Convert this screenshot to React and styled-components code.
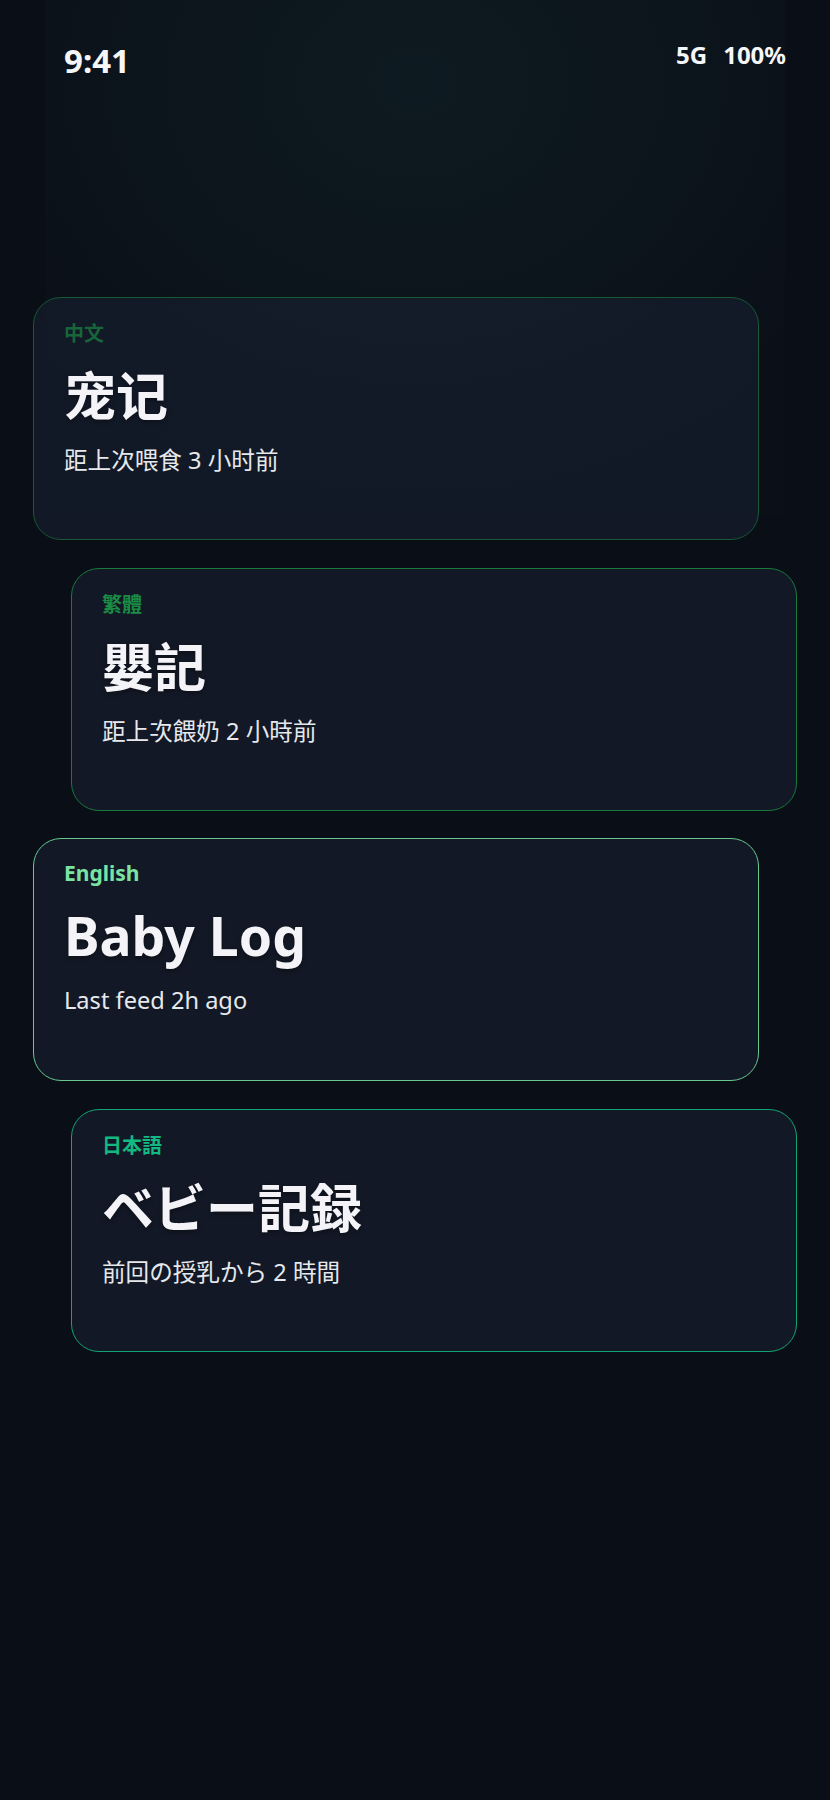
import React from "react";
import styled, { createGlobalStyle } from "styled-components";

const GlobalStyle = createGlobalStyle`
  * { box-sizing: border-box; }
  html, body { margin: 0; padding: 0; background: #0a0e17; }
  body {
    font-family: "Noto Sans", "Noto Sans CJK SC", sans-serif;
    -webkit-font-smoothing: antialiased;
  }
`;

const Screen = styled.div`
  min-height: 1800px;
  width: 830px;
  background-color: #0a0e17;
  background-image: radial-gradient(
    ellipse 72% 85% at 50% 16%,
    rgba(40, 110, 100, 0.13) 0%,
    rgba(40, 110, 100, 0.07) 45%,
    rgba(40, 110, 100, 0.028) 80%,
    rgba(40, 110, 100, 0.012) 100%
  );
  background-size: 740px 515px;
  background-position: 45px 0;
  background-repeat: no-repeat;
  display: flex;
  flex-direction: column;
`;

const StatusBar = styled.div`
  display: flex;
  justify-content: space-between;
  align-items: flex-start;
  padding: 43px 44px 0 64px;
  color: #f5f6f8;
  font-family: "Noto Sans", sans-serif;
  font-weight: 700;
  line-height: 1;
`;

const Clock = styled.span`
  font-size: 33px;
  margin-top: 1px;
`;

const Indicators = styled.div`
  display: flex;
  gap: 16px;
  font-size: 24px;
`;

const CardList = styled.div`
  display: flex;
  flex-direction: column;
  gap: 27.5px;
  margin-top: 220px;
  padding-left: 33px;
`;

const fonts = {
  sc: `"Noto Sans", "Noto Sans CJK SC", sans-serif`,
  tc: `"Noto Sans", "Noto Sans CJK TC", sans-serif`,
  en: `"Noto Sans", sans-serif`,
  jp: `"Noto Sans", "Noto Sans CJK JP", sans-serif`,
};

const Card = styled.section`
  width: 726px;
  height: 243px;
  margin-left: ${(p) => (p.$shift ? "38px" : "0")};
  padding: ${(p) => (p.$latin ? "20px" : "22px")} 30px 0 30px;
  border: 1.5px solid ${(p) => p.$border};
  border-radius: 28px;
  background: rgba(30, 41, 59, 0.4);
  font-family: ${(p) => fonts[p.$lang]};
  display: flex;
  flex-direction: column;
`;

const Label = styled.div`
  font-size: ${(p) => (p.$latin ? "21px" : "20px")};
  line-height: 28px;
  font-weight: 700;
  color: ${(p) => p.$color};
`;

const Title = styled.h2`
  margin: ${(p) => (p.$latin ? "17px" : "16px")} 0 0;
  font-size: ${(p) => (p.$latin ? "53.5px" : "52px")};
  line-height: 64px;
  font-weight: 700;
  color: #f4f4f8;
  text-shadow: 0 2px 4px rgba(0, 0, 0, 0.35);
`;

const Subtitle = styled.p`
  margin: 16px 0 0;
  font-size: 23.6px;
  line-height: 32px;
  font-weight: 400;
  color: #e6e8ec;
`;

const cards = [
  {
    lang: "sc",
    label: "中文",
    labelColor: "#17663a",
    border: "#175a33",
    title: "宠记",
    sub: "距上次喂食 3 小时前",
  },
  {
    lang: "tc",
    label: "繁體",
    labelColor: "#1a8c44",
    border: "#177a3c",
    title: "嬰記",
    sub: "距上次餵奶 2 小時前",
    shift: true,
  },
  {
    lang: "en",
    label: "English",
    labelColor: "#7be3a2",
    border: "#68c990",
    title: "Baby Log",
    sub: "Last feed 2h ago",
    latin: true,
  },
  {
    lang: "jp",
    label: "日本語",
    labelColor: "#12b981",
    border: "#12a574",
    title: "ベビー記録",
    sub: "前回の授乳から 2 時間",
    shift: true,
  },
];

export default function App() {
  return (
    <>
      <GlobalStyle />
      <Screen>
        <StatusBar>
          <Clock>9:41</Clock>
          <Indicators>
            <span>5G</span>
            <span>100%</span>
          </Indicators>
        </StatusBar>
        <CardList>
          {cards.map((c) => (
            <Card
              key={c.lang}
              $lang={c.lang}
              $border={c.border}
              $shift={c.shift}
              $latin={c.latin}
            >
              <Label $color={c.labelColor} $latin={c.latin}>
                {c.label}
              </Label>
              <Title $latin={c.latin}>{c.title}</Title>
              <Subtitle>{c.sub}</Subtitle>
            </Card>
          ))}
        </CardList>
      </Screen>
    </>
  );
}
